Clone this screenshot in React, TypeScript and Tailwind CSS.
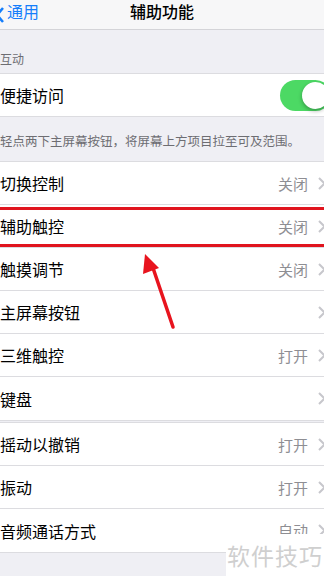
const font = { fontFamily: '"Noto Sans CJK SC", "Noto Sans", sans-serif' };

function Chevron() {
  return (
    <svg width="8" height="13" viewBox="0 0 8 13" className="shrink-0">
      <path d="M1 1l5.5 5.5L1 12" fill="none" stroke="#c7c7cc" strokeWidth="2" />
    </svg>
  );
}

function Row({ label, value, last }: { label: string; value?: string; last?: boolean }) {
  return (
    <div className={`flex items-center h-[43px] bg-white ${last ? '' : 'border-b border-[#dcdce0]'}`}>
      <span className="text-[16px] text-black leading-none">{label}</span>
      <div className="ml-auto flex items-center gap-[10px] mr-[-2px]">
        {value && <span className="text-[15px] text-[#8e8e93] leading-none">{value}</span>}
        <Chevron />
      </div>
    </div>
  );
}

export default function App() {
  return (
    <div className="relative w-[324px] h-[576px] overflow-hidden bg-[#efeff4]" style={font}>
      {/* nav */}
      <div className="relative flex items-center h-[30px] bg-[#f7f7f8] border-b border-[#d4d4d8]">
        <div className="flex items-center -ml-[5px] gap-[2px]">
          <svg width="10" height="16" viewBox="0 0 10 16">
            <path d="M8 1L2 8l6 7" fill="none" stroke="#157efb" strokeWidth="2.5" />
          </svg>
          <span className="text-[16px] text-[#157efb] leading-none -mt-[8px]">通用</span>
        </div>
        <span className="absolute left-0 right-0 text-center text-[16px] font-medium leading-none top-[3px]">辅助功能</span>
      </div>

      <div className="h-[43px] flex items-end pb-[8px]">
        <span className="text-[12px] text-[#6d6d72] leading-none">互动</span>
      </div>

      <div className="flex items-center h-[44px] bg-white border-y border-[#dcdce0]">
        <span className="text-[16px] leading-none">便捷访问</span>
        <div className="ml-auto mr-[-7px] w-[51px] h-[31px] rounded-full bg-[#4cd964] flex items-center justify-end p-[2px]">
          <div className="w-[27px] h-[27px] rounded-full bg-white shadow-[0_2px_4px_rgba(0,0,0,0.3)]" />
        </div>
      </div>

      <div className="h-[44px] pt-[10px]">
        <span className="text-[12.5px] text-[#6d6d72] leading-none whitespace-nowrap">轻点两下主屏幕按钮，将屏幕上方项目拉至可及范围。</span>
      </div>

      <div className="border-t border-[#dcdce0]">
        <Row label="切换控制" value="关闭" />
        <Row label="辅助触控" value="关闭" />
        <Row label="触摸调节" value="关闭" />
        <Row label="主屏幕按钮" />
        <Row label="三维触控" value="打开" />
        <Row label="键盘" last />
      </div>

      <div className="h-[2px] border-t border-[#dcdce0]" />

      <div className="border-y border-[#dcdce0]">
        <Row label="摇动以撤销" value="打开" />
        <Row label="振动" value="打开" />
        <Row label="音频通话方式" value="自动" last />
      </div>

      {/* red highlight box */}
      <div className="absolute left-[-6px] top-[207px] w-[334px] h-[40px] border-[3px] border-[#e0141e] rounded-[2px]" />

      {/* arrow */}
      <svg className="absolute left-0 top-0" width="324" height="576" viewBox="0 0 324 576">
        <line x1="173" y1="327" x2="152" y2="265" stroke="#e8141e" strokeWidth="3.5" strokeLinecap="round" />
        <polygon points="145,254 143,274 159,268" fill="#e8141e" />
      </svg>

      {/* watermark */}
      <div className="absolute left-[226px] top-[534px] w-[98px] h-[42px] bg-white flex items-center justify-center">
        <span className="text-[23px] text-[#cfcfcf] leading-none tracking-[1px]">软件技巧</span>
      </div>
    </div>
  );
}
